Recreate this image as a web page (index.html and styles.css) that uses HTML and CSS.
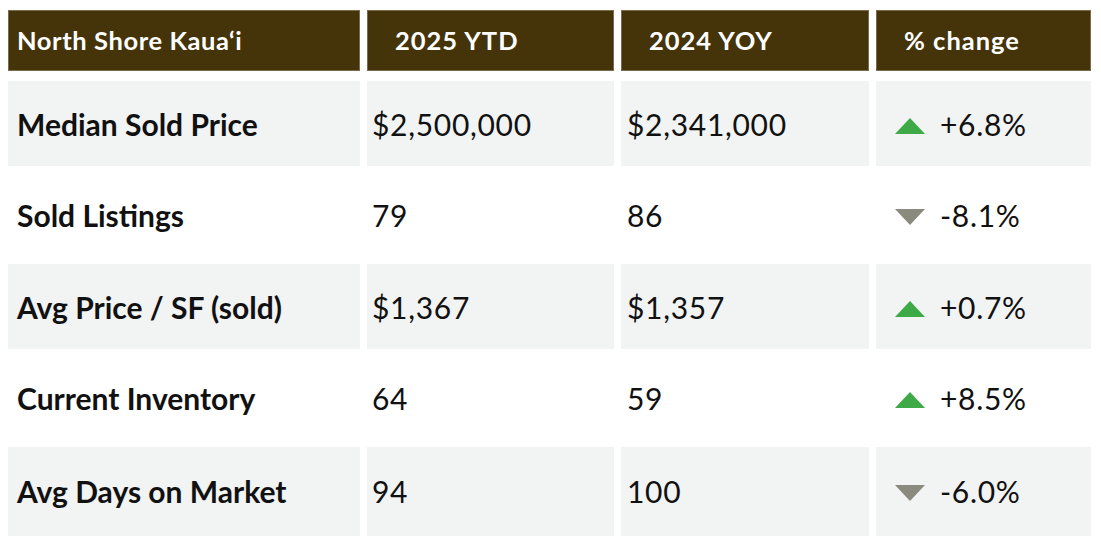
FILE: index.html
```html
<!DOCTYPE html>
<html lang="en">
<head>
<meta charset="utf-8">
<title>North Shore Kauaʻi</title>
<link rel="stylesheet" href="styles.css">
</head>
<body>
<div class="table">
  <div class="row head">
    <div class="cell c1">North Shore Kaua‘i</div>
    <div class="cell c2">2025 YTD</div>
    <div class="cell c3">2024 YOY</div>
    <div class="cell c4">% change</div>
  </div>
  <div class="row shade">
    <div class="cell c1 label">Median Sold Price</div>
    <div class="cell c2">$2,500,000</div>
    <div class="cell c3">$2,341,000</div>
    <div class="cell c4"><span class="tri up"></span>+6.8%</div>
  </div>
  <div class="row">
    <div class="cell c1 label">Sold Listings</div>
    <div class="cell c2">79</div>
    <div class="cell c3">86</div>
    <div class="cell c4"><span class="tri down"></span>-8.1%</div>
  </div>
  <div class="row shade">
    <div class="cell c1 label">Avg Price / SF (sold)</div>
    <div class="cell c2">$1,367</div>
    <div class="cell c3">$1,357</div>
    <div class="cell c4"><span class="tri up"></span>+0.7%</div>
  </div>
  <div class="row">
    <div class="cell c1 label">Current Inventory</div>
    <div class="cell c2">64</div>
    <div class="cell c3">59</div>
    <div class="cell c4"><span class="tri up"></span>+8.5%</div>
  </div>
  <div class="row shade last">
    <div class="cell c1 label">Avg Days on Market</div>
    <div class="cell c2">94</div>
    <div class="cell c3">100</div>
    <div class="cell c4"><span class="tri down"></span>-6.0%</div>
  </div>
</div>
</body>
</html>
```

FILE: styles.css
```css
html, body {
  margin: 0;
  padding: 0;
  background: #ffffff;
}

body {
  font-family: Lato, "Open Sans", "Liberation Sans", sans-serif;
  color: #111111;
}

.table {
  display: flex;
  flex-direction: column;
  gap: 6.5px;
  padding: 10px 0 0 8px;
}

.row {
  display: grid;
  grid-template-columns: 352px 247px 248px 215px;
  column-gap: 7px;
  height: 85px;
}

.row.last {
  height: 88.5px;
}

.cell {
  display: flex;
  align-items: center;
  font-size: 30px;
  font-weight: 400;
  letter-spacing: 0.7px;
  white-space: nowrap;
}

.row.shade .cell {
  background: #f2f3f3;
}

.c1 { padding-left: 9px; }
.c2 { padding-left: 5px; }
.c3 { padding-left: 6px; }
.c4 { padding-left: 19px; }

.label {
  font-weight: 700;
  letter-spacing: 0;
}

.row.head {
  height: 61px;
  margin-bottom: 3.5px;
}

.row.head .cell {
  background: #45340a;
  box-shadow: inset 0 0 0 1px #7a6b4c;
  color: #ffffff;
  font-size: 25.5px;
  font-weight: 700;
  letter-spacing: 0.6px;
  padding-bottom: 2px;
}

.row.head .c2,
.row.head .c3,
.row.head .c4 {
  padding-left: 28px;
  letter-spacing: 1px;
}

.tri {
  width: 0;
  height: 0;
  margin-right: 15px;
  border-left: 15.5px solid transparent;
  border-right: 15.5px solid transparent;
}

.tri.up {
  border-bottom: 16px solid #3eaa47;
  margin-top: 4px;
}

.tri.down {
  border-top: 16px solid #8b8a7f;
  margin-top: 4px;
}
```
